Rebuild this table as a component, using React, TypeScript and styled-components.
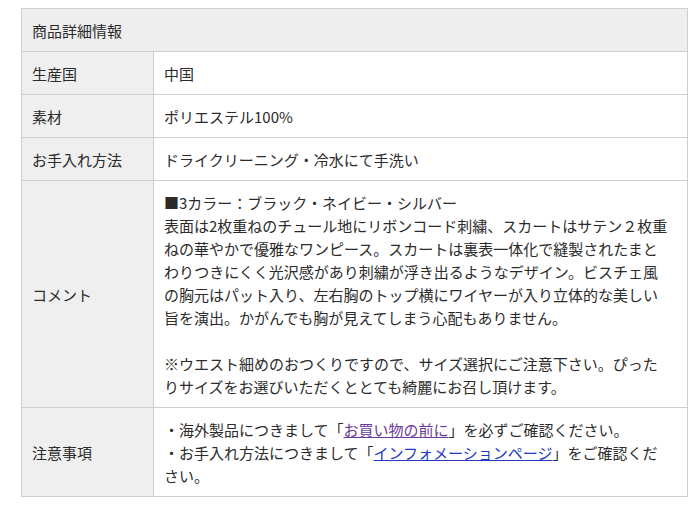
import styled, { createGlobalStyle } from 'styled-components';

const GlobalStyle = createGlobalStyle`
  body {
    margin: 0;
    background: #fff;
    font-family: "Noto Sans CJK JP", "Noto Sans", sans-serif;
    color: #2b2b2b;
  }
`;

const rows = [
  { label: '生産国', value: '中国' },
  { label: '素材', value: 'ポリエステル100%' },
  { label: 'お手入れ方法', value: 'ドライクリーニング・冷水にて手洗い' }
] as const;

const Wrapper = styled.div`
  padding: 8px 0 0 21px;
`;

const SpecTable = styled.table`
  width: 667px;
  border-collapse: collapse;
  border: 1px solid #cfcfcf;
  font-size: 15px;
  line-height: 23px;
`;

const HeadCell = styled.th`
  background: #eee;
  border: 1px solid #cfcfcf;
  padding: 10px 10px 9px;
  text-align: left;
  font-weight: normal;
`;

const LabelCell = styled.th`
  width: 111px;
  background: #efefef;
  border: 1px solid #cfcfcf;
  padding: 10px 10px 9px;
  text-align: left;
  font-weight: normal;
  vertical-align: middle;
`;

const ValueCell = styled.td`
  background: #fff;
  border: 1px solid #cfcfcf;
  padding: 10px 10px 9px;
  vertical-align: middle;
`;

const Gap = styled.div`
  height: 23px;
`;

const TextLink = styled.a<{ $visited?: boolean }>`
  color: ${(p) => (p.$visited ? '#6b3a9a' : '#2438c8')};
  text-decoration: underline;
`;

const App = () => {
  return (
    <Wrapper>
      <GlobalStyle />
      <SpecTable>
        <tbody>
          <tr>
            <HeadCell colSpan={2}>商品詳細情報</HeadCell>
          </tr>
          {rows.map((r) => (
            <tr key={r.label}>
              <LabelCell>{r.label}</LabelCell>
              <ValueCell>{r.value}</ValueCell>
            </tr>
          ))}
          <tr>
            <LabelCell>コメント</LabelCell>
            <ValueCell>
              ■3カラー：ブラック・ネイビー・シルバー
              <br />
              表面は2枚重ねのチュール地にリボンコード刺繍、スカートはサテン２枚重
              <br />
              ねの華やかで優雅なワンピース。スカートは裏表一体化で縫製されたまと
              <br />
              わりつきにくく光沢感があり刺繍が浮き出るようなデザイン。ビスチェ風
              <br />
              の胸元はパット入り、左右胸のトップ横にワイヤーが入り立体的な美しい
              <br />
              旨を演出。かがんでも胸が見えてしまう心配もありません。
              <Gap />
              ※ウエスト細めのおつくりですので、サイズ選択にご注意下さい。ぴった
              <br />
              りサイズをお選びいただくととても綺麗にお召し頂けます。
            </ValueCell>
          </tr>
          <tr>
            <LabelCell>注意事項</LabelCell>
            <ValueCell>
              ・海外製品につきまして「<TextLink href="#" $visited>お買い物の前に</TextLink>」を必ずご確認ください。
              <br />
              ・お手入れ方法につきまして「<TextLink href="#">インフォメーションページ</TextLink>」をご確認くだ
              <br />
              さい。
            </ValueCell>
          </tr>
        </tbody>
      </SpecTable>
    </Wrapper>
  );
};

export default App;
